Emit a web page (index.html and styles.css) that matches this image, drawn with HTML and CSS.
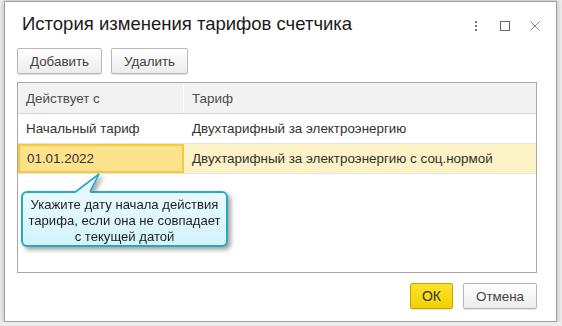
FILE: index.html
```html
<!DOCTYPE html>
<html lang="ru">
<head>
  <meta charset="UTF-8">
  <title>История изменения тарифов счетчика</title>
  <link rel="stylesheet" href="styles.css">
</head>
<body>
  <div class="dialog">
    <div class="titlebar">
      <h1 class="title">История изменения тарифов счетчика</h1>
      <div class="win-buttons">
        <svg class="win-icon" width="10" height="12" viewBox="0 0 10 12">
          <rect x="4" y="1" width="2" height="2" fill="#777"/>
          <rect x="4" y="5" width="2" height="2" fill="#777"/>
          <rect x="4" y="9" width="2" height="2" fill="#777"/>
        </svg>
        <svg class="win-icon" width="12" height="12" viewBox="0 0 12 12">
          <rect x="1.5" y="1.5" width="9" height="9" fill="none" stroke="#666" stroke-width="1"/>
        </svg>
        <svg class="win-icon" width="12" height="12" viewBox="0 0 12 12">
          <path d="M1.5 1.5 L10.5 10.5 M10.5 1.5 L1.5 10.5" stroke="#888" stroke-width="1" fill="none"/>
        </svg>
      </div>
    </div>

    <div class="toolbar">
      <button class="btn btn-add">Добавить</button>
      <button class="btn btn-del">Удалить</button>
    </div>

    <div class="grid">
      <div class="grid-head">
        <div class="cell">Действует с</div>
        <div class="cell">Тариф</div>
      </div>
      <div class="grid-row">
        <div class="cell">Начальный тариф</div>
        <div class="cell">Двухтарифный за электроэнергию</div>
      </div>
      <div class="grid-row selected">
        <div class="cell current">01.01.2022</div>
        <div class="cell">Двухтарифный за электроэнергию с соц.нормой</div>
      </div>

      <div class="hint">
        <svg class="hint-tail" width="90" height="22" viewBox="0 0 90 22">
          <polygon points="55,18 78,1 69,18 69,22 55,22" fill="#e6fafe"/>
          <path d="M55 18.5 L78 1 L69 18.5" fill="none" stroke="#26a8c8" stroke-width="1.6"/>
        </svg>
        <div class="hint-body">
          Укажите дату начала действия<br>
          тарифа, если она не совпадает<br>
          с текущей датой
        </div>
      </div>
    </div>

    <div class="footer">
      <button class="btn btn-ok">ОК</button>
      <button class="btn btn-cancel">Отмена</button>
    </div>
  </div>
</body>
</html>
```

FILE: styles.css
```css
body {
  margin: 0;
  background: #ececec;
  font-family: "Liberation Sans", Arial, sans-serif;
  color: #333;
}
.dialog {
  box-sizing: border-box;
  width: 553px;
  height: 321px;
  margin: 1px 0 0 4px;
  background: #fff;
  border: 1px solid #a0a0a0;
  box-shadow: 0 0 5px rgba(0,0,0,0.25);
  display: flex;
  flex-direction: column;
}
.titlebar {
  display: flex;
  align-items: center;
  height: 44px;
  padding: 0 15px 0 17px;
}
.title {
  flex: 1;
  margin: 0;
  font-size: 18.5px;
  font-weight: normal;
  color: #1a1a1a;
}
.win-buttons {
  display: flex;
  align-items: center;
  gap: 18px;
  padding-top: 3px;
}
.win-icon {
  display: block;
}
.toolbar {
  display: flex;
  gap: 9px;
  padding: 2px 0 0 12px;
}
.btn {
  box-sizing: border-box;
  height: 26px;
  padding: 0;
  font-family: inherit;
  font-size: 13.4px;
  color: #444;
  background: linear-gradient(#ffffff, #ececec);
  border: 1px solid #b8b8b8;
  border-radius: 2px;
  box-shadow: 0 1px 1px rgba(0,0,0,0.12);
}
.btn-add { width: 85px; }
.btn-del { width: 77px; }
.btn-ok {
  width: 43px;
  font-size: 14px;
  color: #333;
  background: linear-gradient(#fbe12c, #f4d200);
  border-color: #c8a600;
}
.btn-cancel { width: 74px; }

.grid {
  position: relative;
  box-sizing: border-box;
  height: 191px;
  margin: 8px 19px 0 12px;
  border: 1px solid #a8a8a8;
  font-size: 13.4px;
}
.grid-head,
.grid-row {
  display: grid;
  grid-template-columns: 166px 1fr;
}
.grid-head {
  height: 30px;
  background: #f2f2f2;
  border-bottom: 1px solid #d4d4d4;
  color: #4d4d4d;
}
.grid-head .cell:first-child {
  border-right: 1px solid #fff;
}
.grid-row {
  height: 29px;
  border-bottom: 1px solid #e4e4e4;
}
.cell {
  display: flex;
  align-items: center;
  padding-left: 8px;
  white-space: nowrap;
}
.selected {
  background: #fdf1c6;
}
.current {
  box-sizing: border-box;
  padding-left: 7px;
  background: #fde28c;
  border: 2px solid #f7c83a;
}

.hint {
  position: absolute;
  left: 3px;
  top: 108px;
  width: 207px;
  filter: drop-shadow(3px 3px 2px rgba(0,0,0,0.35));
}
.hint-tail {
  position: absolute;
  left: 0;
  top: -18px;
  z-index: 1;
}
.hint-body {
  box-sizing: border-box;
  height: 56px;
  padding-top: 4px;
  background: linear-gradient(#e9fbfe, #d3f3fa);
  border: 2px solid #26a8c8;
  border-radius: 6px;
  text-align: center;
  line-height: 16px;
  font-size: 13.1px;
  color: #1e1e1e;
  white-space: nowrap;
}

.footer {
  display: flex;
  justify-content: flex-end;
  gap: 10px;
  padding: 10px 19px 0 0;
}
```
